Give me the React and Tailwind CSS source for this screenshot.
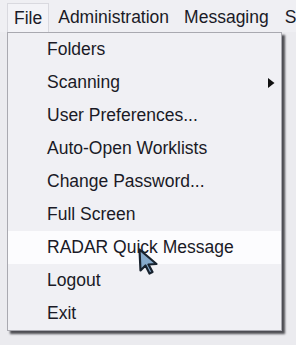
import React from 'react'

const items = [
  { label: 'Folders' },
  { label: 'Scanning', sub: true },
  { label: 'User Preferences...' },
  { label: 'Auto-Open Worklists' },
  { label: 'Change Password...' },
  { label: 'Full Screen' },
  { label: 'RADAR Quick Message', hover: true },
  { label: 'Logout' },
  { label: 'Exit' },
]

function Cursor() {
  return (
    <svg className="absolute left-[138px] top-[248px]" width="24" height="28" viewBox="0 0 24 28">
      <path
        d="M1.5 1.5 L2.5 22.5 L7.5 17.5 L11.5 25.5 L14.5 24 L10.5 16.5 L18.5 16 Z"
        fill="#86aacb"
        stroke="#18222e"
        strokeWidth="2.2"
        strokeLinejoin="round"
      />
    </svg>
  )
}

export default function App() {
  return (
    <div className="relative w-[296px] h-[345px] overflow-hidden bg-[#ebebef] font-['Liberation_Sans',Arial,sans-serif] text-[17.5px] text-[#1a1a26]">
      {/* Menu bar */}
      <div className="flex items-end h-[32px] pl-[7px] bg-[#efeff3] whitespace-nowrap">
        <div className="flex items-center h-[29px] px-[6px] border border-b-0 border-[#d9d9df] bg-[#f3f3f7]">File</div>
        <div className="flex items-center h-[29px] ml-[9px]">Administration</div>
        <div className="flex items-center h-[29px] ml-[15px]">Messaging</div>
        <div className="flex items-center h-[29px] ml-[16px]">S</div>
      </div>

      {/* File dropdown */}
      <div className="ml-[7px] w-[275px] border border-[#a9a9b0] bg-[#f0f0f4] shadow-[3px_3px_2px_rgba(50,50,56,0.85)]">
        {items.map((item) => (
          <div
            key={item.label}
            className={`flex items-center justify-between h-[33px] pl-[39px] pr-[6px] ${item.hover ? 'bg-[#fcfcfe]' : ''}`}
          >
            <span>{item.label}</span>
            {item.sub && (
              <svg width="7" height="10" viewBox="0 0 7 10">
                <path d="M0 0 L6.5 5 L0 10 Z" fill="#111" />
              </svg>
            )}
          </div>
        ))}
      </div>

      <Cursor />
    </div>
  )
}
